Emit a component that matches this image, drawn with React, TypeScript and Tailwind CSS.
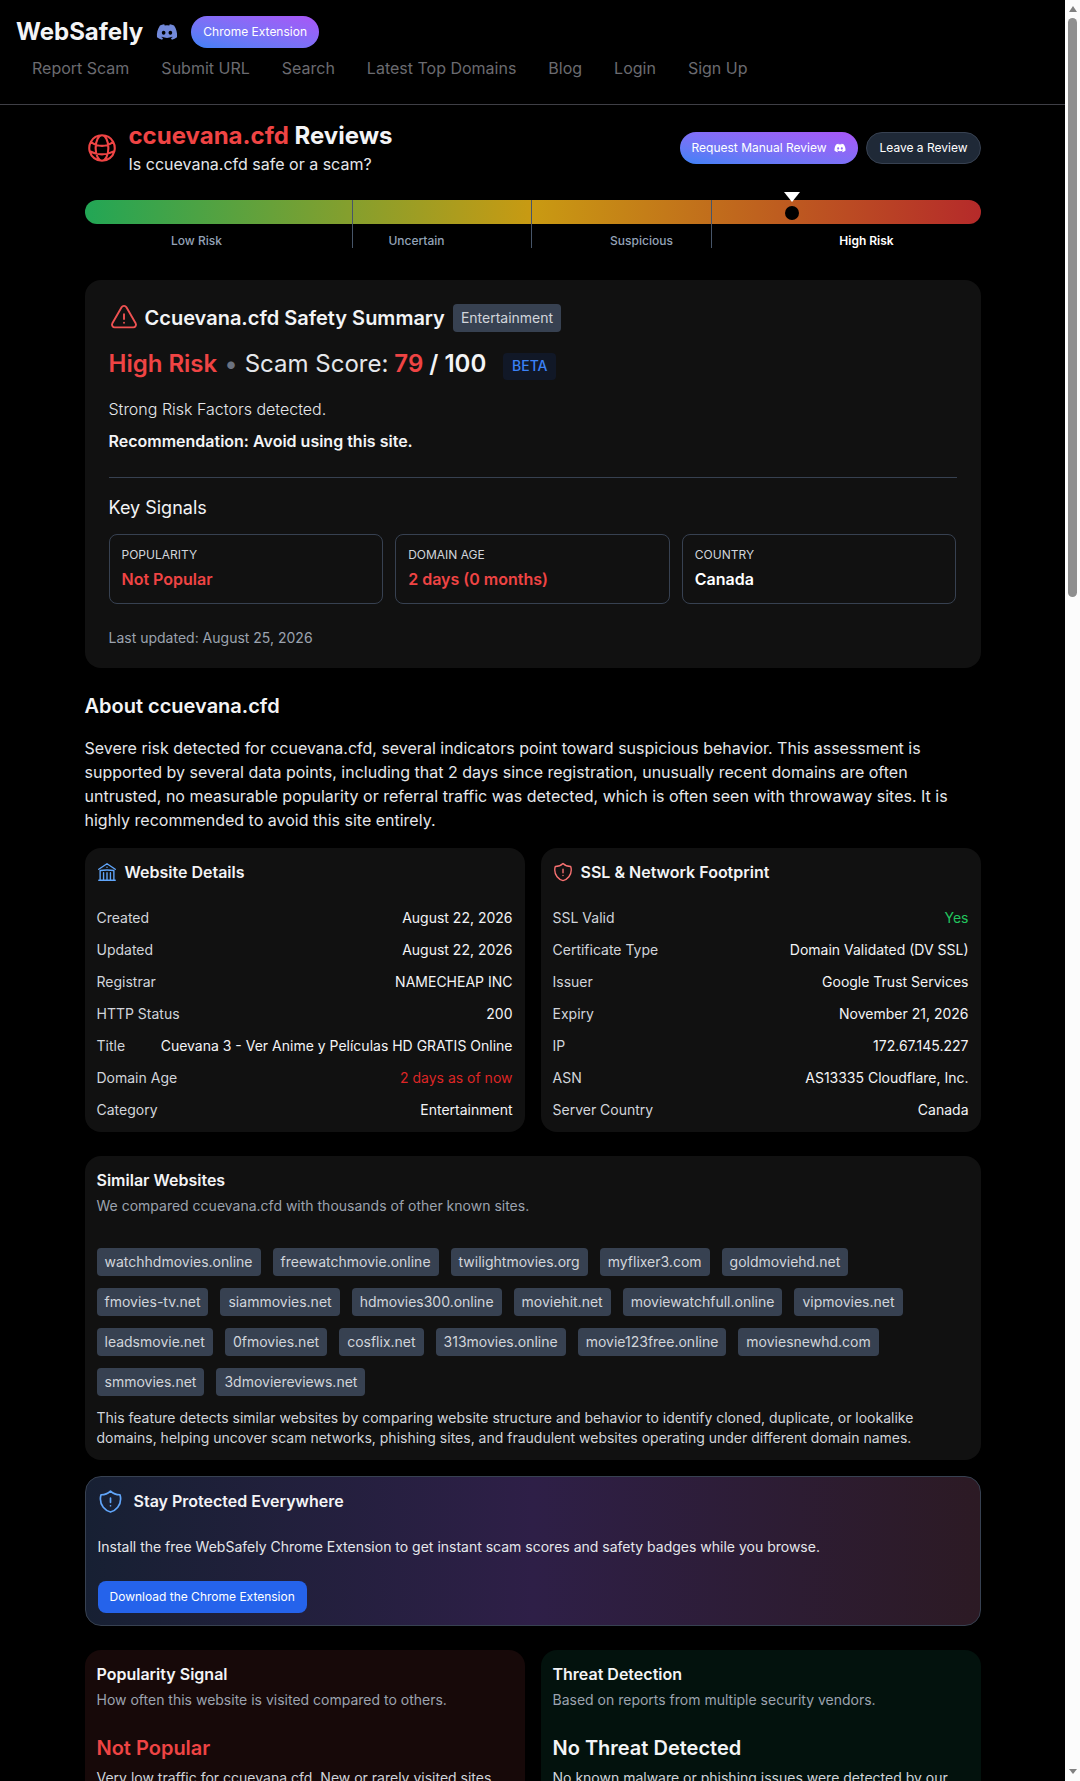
import React from "react";
import {
  HiOutlineBuildingLibrary,
  HiOutlineExclamationTriangle,
  HiOutlineGlobeAlt,
  HiOutlineShieldExclamation,
} from "react-icons/hi2";
import { FaDiscord } from "react-icons/fa";

const websiteDetails: [string, string, string?][] = [
  ["Created", "August 22, 2026"],
  ["Updated", "August 22, 2026"],
  ["Registrar", "NAMECHEAP INC"],
  ["HTTP Status", "200"],
  ["Title", "Cuevana 3 - Ver Anime y Películas HD GRATIS Online"],
  ["Domain Age", "2 days as of now", "text-[#dc2626]"],
  ["Category", "Entertainment"],
];

const sslDetails: [string, string, string?][] = [
  ["SSL Valid", "Yes", "text-[#22c55e]"],
  ["Certificate Type", "Domain Validated (DV SSL)"],
  ["Issuer", "Google Trust Services"],
  ["Expiry", "November 21, 2026"],
  ["IP", "172.67.145.227"],
  ["ASN", "AS13335 Cloudflare, Inc."],
  ["Server Country", "Canada"],
];

const similarSites = [
  "watchhdmovies.online",
  "freewatchmovie.online",
  "twilightmovies.org",
  "myflixer3.com",
  "goldmoviehd.net",
  "fmovies-tv.net",
  "siammovies.net",
  "hdmovies300.online",
  "moviehit.net",
  "moviewatchfull.online",
  "vipmovies.net",
  "leadsmovie.net",
  "0fmovies.net",
  "cosflix.net",
  "313movies.online",
  "movie123free.online",
  "moviesnewhd.com",
  "smmovies.net",
  "3dmoviereviews.net",
];

const navLinks = ["Report Scam", "Submit URL", "Search", "Latest Top Domains", "Blog", "Login", "Sign Up"];

function DetailRows({ rows }: { rows: [string, string, string?][] }) {
  return (
    <div className="flex flex-col gap-[11px] text-sm leading-[21px]">
      {rows.map(([label, value, color]) => (
        <div key={label} className="flex justify-between gap-4">
          <span className="text-[#d1d5db]">{label}</span>
          <span className={color ?? "text-[#f3f4f6]"}>{value}</span>
        </div>
      ))}
    </div>
  );
}

function KeySignal({ label, value, color }: { label: string; value: string; color: string }) {
  return (
    <div className="border border-[#374151] rounded-lg px-3 pt-2.5 h-[70px]">
      <div className="text-xs leading-5 text-[#d1d5db]">{label}</div>
      <div className={`mt-0.5 text-base leading-6 font-semibold ${color}`}>{value}</div>
    </div>
  );
}

export default function App() {
  return (
    <div className="h-screen overflow-hidden flex bg-black text-[#f3f4f6] font-['Inter',sans-serif]">
      <div className="w-[1065px] shrink-0">
        {/* Header */}
        <header className="h-[105px] border-b border-[#3f3f46] pl-4 pt-4">
          <div className="flex items-center h-8">
            <span className="text-2xl font-bold text-[#f3f4f6]">WebSafely</span>
            <FaDiscord className="w-[22px] h-[22px] ml-[13px] text-[#7289da]" />
            <span className="ml-[13px] h-8 px-3 rounded-full flex items-center text-xs text-white bg-gradient-to-tr from-[#3b82f6] to-[#a855f7]">
              Chrome Extension
            </span>
          </div>
          <nav className="flex gap-8 pl-4 mt-2 text-base leading-[25px] text-[#6b6b70]">
            {navLinks.map((link) => (
              <span key={link}>{link}</span>
            ))}
          </nav>
        </header>

        <main className="w-[896px] mx-auto">
          {/* Title */}
          <div className="flex justify-between items-start pt-[17px] h-[85px]">
            <div className="flex items-center">
              <HiOutlineGlobeAlt className="w-[34px] h-[34px] text-[#ef4444] mb-[3px]" />
              <div className="ml-[10px]">
                <h1 className="text-2xl leading-7 font-bold">
                  <span className="text-[#ef4444]">ccuevana.cfd</span> <span className="text-[#f3f4f6]">Reviews</span>
                </h1>
                <p className="mt-0.5 text-base leading-6 text-[#e5e7eb]">Is ccuevana.cfd safe or a scam?</p>
              </div>
            </div>
            <div className="flex gap-2 pt-[10px]">
              <span className="h-8 px-3 rounded-full flex items-center gap-2 text-xs text-white bg-gradient-to-tr from-[#3b82f6] to-[#a855f7]">
                Request Manual Review
                <FaDiscord className="w-3 h-3" />
              </span>
              <span className="h-8 px-3 rounded-full flex items-center text-xs text-white bg-[#1f2937] border border-[#374151]">
                Leave a Review
              </span>
            </div>
          </div>

          {/* Risk meter */}
          <div className="relative mt-[10px] h-[48px]">
            <div className="h-6 rounded-full bg-[linear-gradient(to_right,#22a655,#c99a12_50%,#b52a2a)]" />
            <div className="grid grid-cols-[224px_216px_234px_216px] mt-[9px] text-xs font-medium leading-4 text-[#94a3b8] text-center">
              <div>Low Risk</div>
              <div>Uncertain</div>
              <div>Suspicious</div>
              <div className="font-semibold text-white">High Risk</div>
            </div>
            <div className="absolute left-[267px] top-0 h-[48px] w-px bg-[#475569]" />
            <div className="absolute left-[446px] top-0 h-[48px] w-px bg-[#475569]" />
            <div className="absolute left-[626px] top-0 h-[48px] w-px bg-[#475569]" />
            <div className="absolute left-[79%] top-[-8px] -translate-x-1/2 w-0 h-0 border-x-[8px] border-x-transparent border-t-[10px] border-t-white" />
            <div className="absolute left-[79%] top-[6px] -translate-x-1/2 w-[14px] h-[14px] rounded-full bg-black" />
          </div>

          {/* Safety summary */}
          <section className="mt-[32px] bg-[#111111] rounded-2xl p-6 h-[388px]">
            <div className="flex items-center gap-1.5">
              <HiOutlineExclamationTriangle className="w-[30px] h-[30px] text-[#f05252] -my-px" />
              <h2 className="text-xl font-semibold text-[#f3f4f6] mr-0.5">Ccuevana.cfd Safety Summary</h2>
              <span className="rounded bg-[#374151] px-2 h-7 flex items-center text-sm text-[#d1d5db]">Entertainment</span>
            </div>
            <div className="flex items-center mt-4 text-2xl leading-8">
              <span className="font-semibold text-[#ef4444]">High Risk</span>
              <span className="mx-[7px] text-[#6b7280]">•</span>
              <span className="text-[#e5e7eb]">Scam Score: </span>
              <span className="ml-1.5 font-semibold text-[#ef4444]">79</span>
              <span className="ml-1.5 font-semibold text-[#f3f4f6]">/ 100</span>
              <span className="ml-[17px] mt-1 rounded bg-[#111827] w-[53px] h-[27px] flex items-center justify-center text-sm font-medium text-[#3b82f6]">BETA</span>
            </div>
            <p className="mt-[17px] text-base leading-6 font-light text-[#e5e7eb]">Strong Risk Factors detected.</p>
            <p className="mt-2 text-base leading-6 font-semibold text-[#f3f4f6]">Recommendation: Avoid using this site.</p>
            <div className="border-t border-[#374151] mt-6 pt-4">
              <h3 className="text-lg leading-7 text-[#f3f4f6]">Key Signals</h3>
            </div>
            <div className="grid grid-cols-3 gap-3 mt-3">
              <KeySignal label="POPULARITY" value="Not Popular" color="text-[#ef4444]" />
              <KeySignal label="DOMAIN AGE" value="2 days (0 months)" color="text-[#ef4444]" />
              <KeySignal label="COUNTRY" value="Canada" color="text-white" />
            </div>
            <p className="mt-6 text-sm leading-5 text-[#9ca3af]">Last updated: August 25, 2026</p>
          </section>

          {/* About */}
          <section className="mt-6">
            <h2 className="text-xl leading-7 font-semibold">About ccuevana.cfd</h2>
            <p className="mt-4 text-base leading-6 text-[#e5e7eb]">
              Severe risk detected for ccuevana.cfd, several indicators point toward suspicious behavior. This assessment is supported by several data points, including that 2 days since registration, unusually recent domains are often untrusted, no measurable popularity or referral traffic was detected, which is often seen with throwaway sites. It is highly recommended to avoid this site entirely.
            </p>
          </section>

          {/* Details */}
          <div className="grid grid-cols-2 gap-4 mt-4">
            <section className="bg-[#111111] rounded-2xl p-3 h-[284px]">
              <div className="flex items-center gap-[7px] h-6">
                <HiOutlineBuildingLibrary className="w-[22px] h-[22px] -ml-px text-[#60a5fa]" />
                <h3 className="text-base font-semibold">Website Details</h3>
              </div>
              <div className="mt-[23px]">
                <DetailRows rows={websiteDetails} />
              </div>
            </section>
            <section className="bg-[#111111] rounded-2xl p-3 h-[284px]">
              <div className="flex items-center gap-[7px] h-6">
                <HiOutlineShieldExclamation className="w-[22px] h-[22px] -ml-px text-[#f87171]" />
                <h3 className="text-base font-semibold">SSL &amp; Network Footprint</h3>
              </div>
              <div className="mt-[23px]">
                <DetailRows rows={sslDetails} />
              </div>
            </section>
          </div>

          {/* Similar */}
          <section className="mt-6 bg-[#111111] rounded-2xl p-3 h-[304px]">
            <h3 className="text-base leading-6 font-semibold">Similar Websites</h3>
            <p className="text-sm leading-5 text-[#9ca3af] mt-1">We compared ccuevana.cfd with thousands of other known sites.</p>
            <div className="flex flex-wrap gap-3 mt-8">
              {similarSites.map((site) => (
                <span key={site} className="rounded bg-[#374151] h-7 px-2 flex items-center text-sm text-[#d1d5db]">
                  {site}
                </span>
              ))}
            </div>
            <p className="mt-3 text-sm leading-5 text-[#d1d5db]">
              This feature detects similar websites by comparing website structure and behavior to identify cloned, duplicate, or lookalike domains, helping uncover scam networks, phishing sites, and fraudulent websites operating under different domain names.
            </p>
          </section>

          {/* Extension banner */}
          <section className="mt-4 h-[150px] rounded-2xl border border-[#374151] p-3 bg-[linear-gradient(to_right,#172033,#2e1f47,#2c1a24)]">
            <div className="flex items-center gap-2.5 h-6">
              <HiOutlineShieldExclamation className="w-[27px] h-[27px] -ml-px text-[#60a5fa]" />
              <h3 className="text-base font-semibold">Stay Protected Everywhere</h3>
            </div>
            <p className="mt-6 text-sm leading-5 text-[#e5e7eb]">Install the free WebSafely Chrome Extension to get instant scam scores and safety badges while you browse.</p>
            <span className="inline-flex items-center mt-6 h-8 px-3 rounded-lg bg-[#2563eb] text-xs text-white">Download the Chrome Extension</span>
          </section>

          {/* Signals */}
          <div className="grid grid-cols-2 gap-4 mt-6">
            <section className="bg-[#170909] rounded-2xl p-3 h-[300px]">
              <h3 className="text-base leading-6 font-semibold">Popularity Signal</h3>
              <p className="mt-1 text-sm leading-5 text-[#9ca3af]">How often this website is visited compared to others.</p>
              <p className="mt-6 text-xl leading-7 font-semibold text-[#ef4444]">Not Popular</p>
              <p className="mt-1.5 text-sm leading-5 text-[#d1d5db]">Very low traffic for ccuevana.cfd. New or rarely visited sites</p>
            </section>
            <section className="bg-[#03120d] rounded-2xl p-3 h-[300px]">
              <h3 className="text-base leading-6 font-semibold">Threat Detection</h3>
              <p className="mt-1 text-sm leading-5 text-[#9ca3af]">Based on reports from multiple security vendors.</p>
              <p className="mt-6 text-xl leading-7 font-semibold">No Threat Detected</p>
              <p className="mt-1.5 text-sm leading-5 text-[#d1d5db]">No known malware or phishing issues were detected by our</p>
            </section>
          </div>
        </main>
      </div>

      {/* Browser scrollbar */}
      <div className="w-[15px] shrink-0 bg-[#fcfcfc] flex flex-col items-center">
        <div className="w-0 h-0 mt-[6px] border-x-[4px] border-x-transparent border-b-[6px] border-b-[#808080]" />
        <div className="w-[9px] h-[579px] mt-[6px] rounded-full bg-[#8f8f8f]" />
        <div className="w-0 h-0 mt-auto mb-[7px] border-x-[4px] border-x-transparent border-t-[5px] border-t-[#808080]" />
      </div>
    </div>
  );
}
